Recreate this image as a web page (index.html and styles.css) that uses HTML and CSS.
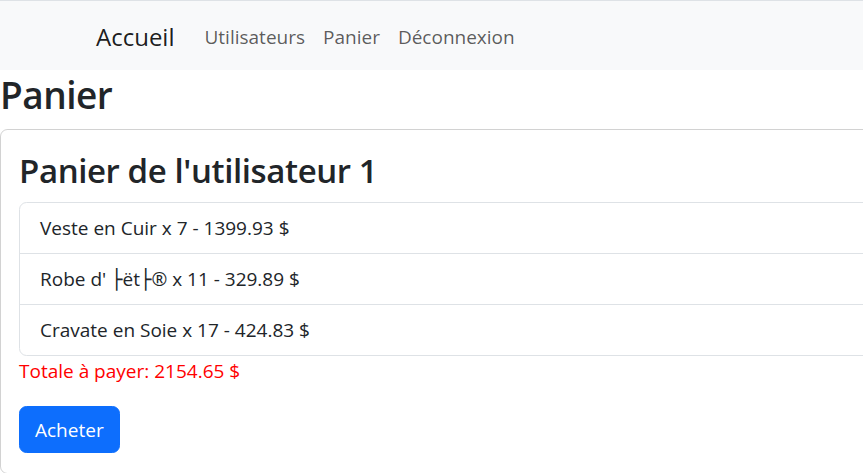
FILE: index.html
```html
<!DOCTYPE html>
<html lang="fr">
<head>
<meta charset="utf-8">
<title>Panier</title>
<link rel="stylesheet" href="styles.css">
</head>
<body>
<div class="page">
  <nav class="navbar">
    <a class="brand" href="#">Accueil</a>
    <div class="nav">
      <a class="nav-link" href="#">Utilisateurs</a>
      <a class="nav-link" href="#">Panier</a>
      <a class="nav-link" href="#">Déconnexion</a>
    </div>
  </nav>
  <h1 class="title">Panier</h1>
  <div class="card">
    <h2 class="card-title">Panier de l'utilisateur 1</h2>
    <ul class="list">
      <li class="item">Veste en Cuir x 7 - 1399.93 $</li>
      <li class="item">Robe d' ├ët├® x 11 - 329.89 $</li>
      <li class="item">Cravate en Soie x 17 - 424.83 $</li>
    </ul>
    <p class="total">Totale à payer: 2154.65 $</p>
    <button class="btn" type="button">Acheter</button>
  </div>
</div>
</body>
</html>
```
FILE: styles.css
```css
html, body {
  margin: 0;
  padding: 0;
  overflow: hidden;
  background: #fff;
}
body {
  font-family: "Open Sans", "DejaVu Sans", sans-serif;
  font-size: 19px;
  line-height: 30px;
  color: #212529;
}
.page {
  width: 925px;
}
.navbar {
  border-top: 1px solid #dee2e6;
  background: #f8f9fa;
  height: 69px;
  box-sizing: border-box;
  height: 70px;
  display: flex;
  align-items: center;
  padding-left: 96px;
  padding-top: 2px;
}
.brand {
  font-size: 24px;
  line-height: 37px;
  color: rgba(0, 0, 0, 0.9);
  text-decoration: none;
  margin-right: 21px;
}
.nav {
  display: flex;
}
.nav-link {
  padding: 0 9px;
  color: rgba(0, 0, 0, 0.65);
  text-decoration: none;
}
.title {
  font-size: 37px;
  line-height: 49px;
  font-weight: 600;
  letter-spacing: -0.5px;
  margin: 0 0 10px;
}
.card {
  border: 1px solid rgba(0, 0, 0, 0.175);
  border-radius: 7.5px;
  padding: 20px 18px;
}
.card-title {
  font-size: 33px;
  line-height: 42px;
  font-weight: 600;
  letter-spacing: -0.4px;
  margin: 0 0 10px;
}
.list {
  list-style: none;
  margin: 0;
  padding: 0;
  border: 1px solid #dee2e6;
  border-radius: 7.5px;
}
.item {
  padding: 10px 20px;
  border-top: 1px solid #dee2e6;
}
.item:first-child {
  border-top: 0;
}
.total {
  color: #ff0000;
  margin: 0 0 20px;
}
.btn {
  font-family: inherit;
  font-size: 19px;
  line-height: 30px;
  color: #fff;
  background: #0d6efd;
  border: 1px solid #0d6efd;
  border-radius: 7.5px;
  padding: 7.5px 15px;
  cursor: pointer;
}
```
